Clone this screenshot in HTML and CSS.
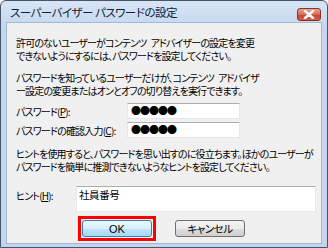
FILE: index.html
```html
<!DOCTYPE html>
<html lang="ja">
<head>
<meta charset="utf-8">
<link rel="stylesheet" href="styles.css">
</head>
<body>
<div class="win">
  <div class="titlebar">
    <span class="title">スーパーバイザー パスワードの設定</span>
    <span class="close"><svg width="12" height="9" viewBox="0 0 12 9"><path d="M2 1 L10 8 M10 1 L2 8" stroke="#fff" stroke-width="2.4" stroke-linecap="round"/></svg></span>
  </div>
  <div class="panel">
    <p class="para">許可のないユーザーがコンテンツ&ensp;アドバイザーの設定を変更<br>できないようにするには、パスワードを設定してください。</p>
    <p class="para gap">パスワードを知っているユーザーだけが、コンテンツ&ensp;アドバイザ<br>ー設定の変更またはオンとオフの切り替えを実行できます。</p>
    <div class="row first">
      <span class="label">パスワード(<u>P</u>):</span>
      <span class="field pw">●●●●●</span>
    </div>
    <div class="row">
      <span class="label">パスワードの確認入力(<u>C</u>):</span>
      <span class="field pw">●●●●●</span>
    </div>
    <p class="para hinttext">ヒントを使用すると、パスワードを思い出すのに役立ちます。ほかのユーザーが<br>パスワードを簡単に推測できないようなヒントを設定してください。</p>
    <div class="row hintrow">
      <span class="label short">ヒント(<u>H</u>):</span>
      <span class="field hint">社員番号</span>
    </div>
    <div class="buttons">
      <span class="mark"><span class="btn ok">OK</span></span>
      <span class="btn">キャンセル</span>
    </div>
  </div>
</div>
</body>
</html>
```

FILE: styles.css
```css
* { box-sizing: border-box; }
html, body { margin: 0; padding: 0; }
body {
  width: 328px; height: 248px; overflow: hidden;
  font-family: "Noto Sans CJK JP", "Liberation Sans", sans-serif;
  font-size: 10px;
  font-feature-settings: "palt";
  color: #000;
  background: #fff;
}
.win {
  width: 328px; height: 248px;
  border: 1px solid #46566b;
  border-radius: 6px 6px 0 0;
  background: linear-gradient(#d7e4f4, #c3d6ee 30px, #c3d6ee);
  display: flex; flex-direction: column;
  padding: 0 5px 3px 5px;
}
.titlebar {
  height: 21px; display: flex; align-items: center;
  padding-left: 4px;
}
.title { font-size: 11.5px; color: #10203a; letter-spacing: -0.5px; white-space: nowrap; }
.close {
  margin-left: auto; align-self: flex-start; margin-top: 7px; margin-right: 1px;
  width: 24px; height: 13px;
  border: 1px solid #8a3024; border-radius: 3px;
  background: linear-gradient(#e8a497, #d46a5a 50%, #c2402f 51%, #d0644f);
  display: flex; align-items: center; justify-content: center;
}
.close svg { display: block; }
.panel {
  flex: 1;
  background: #f0f0f0;
  border: 1px solid #a3b8d3;
  padding: 13px 5px 0 9px;
  display: flex; flex-direction: column;
}
.para { margin: 0; line-height: 13px; letter-spacing: -0.85px; white-space: nowrap; }
.para.gap { margin-top: 9px; }
.row { display: flex; align-items: center; height: 16px; margin-top: 3px; }
.row.first { margin-top: 6px; }
.label { width: 111px; letter-spacing: -0.8px; white-space: nowrap; }
.label.short { width: 60px; align-self: flex-start; margin-top: 2px; }
.field {
  background: #fff;
  border: 1px solid #e2e8ee; border-top-color: #abadb3;
  height: 16px;
}
.pw { width: 113px; font-size: 10px; line-height: 14px; padding-left: 3px; letter-spacing: -1px; }
.hinttext { margin-top: 9px; }
.hintrow { margin-top: 13px; height: 26px; align-items: flex-start; }
.hint { flex: 1; height: 26px; padding: 1px 2px; line-height: 13px; font-size: 10.5px; letter-spacing: -0.4px; }
.buttons { display: flex; align-items: center; margin-top: 4px; padding-left: 62px; }
.mark { border: 3px solid #f00; padding: 1px; display: flex; }
.btn {
  width: 70px; height: 17px;
  border: 1px solid #707070; border-radius: 3px;
  background: linear-gradient(#f2f2f2, #ebebeb 50%, #dddddd 51%, #cfcfcf);
  display: flex; align-items: center; justify-content: center;
  font-size: 10.5px; letter-spacing: -0.5px;
  margin-left: 19px;
}
.mark .btn { margin-left: 0; }
.btn.ok {
  border-color: #3c7fb1;
  background: linear-gradient(#eaf6fd, #d9f0fc 50%, #bee6fd 51%, #a7d9f5);
  font-family: "Liberation Sans", sans-serif;
  font-size: 11px; letter-spacing: 0;
}
```
